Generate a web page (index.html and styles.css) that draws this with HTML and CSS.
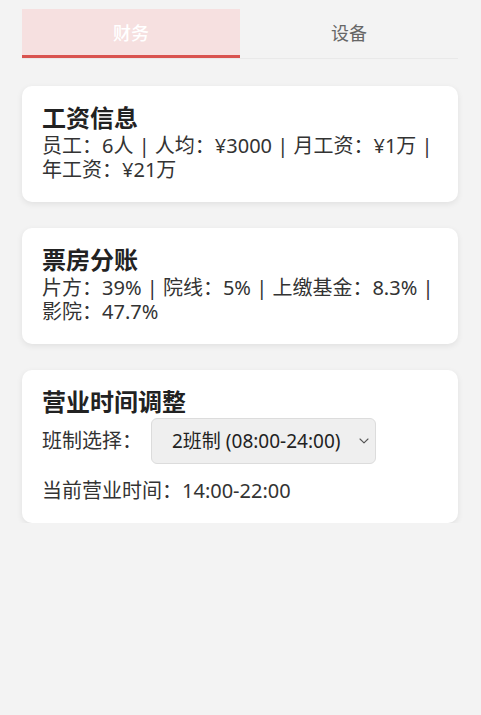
FILE: index.html
```html
<!DOCTYPE html>
<html lang="zh-CN">
<head>
<meta charset="utf-8">
<title>财务</title>
<link rel="stylesheet" href="styles.css">
</head>
<body>
<div class="page">
  <div class="tabs">
    <div class="tab active">财务</div>
    <div class="tab">设备</div>
  </div>

  <div class="card">
    <h2 class="card-title">工资信息</h2>
    <p class="card-text">员工：6人 | 人均：¥3000 | 月工资：¥1万 | 年工资：¥21万</p>
  </div>

  <div class="card">
    <h2 class="card-title">票房分账</h2>
    <p class="card-text">片方：39% | 院线：5% | 上缴基金：8.3% | 影院：47.7%</p>
  </div>

  <div class="card">
    <h2 class="card-title">营业时间调整</h2>
    <div class="shift-row">
      <label class="shift-label" for="shift">班制选择：</label>
      <div class="select-wrap">
        <select id="shift" class="shift-select">
          <option>2班制 (08:00-24:00)</option>
        </select>
        <svg class="chevron" width="12" height="8" viewBox="0 0 12 8"><path d="M2 2 L6 5.8 L10 2" fill="none" stroke="#555" stroke-width="1.1" stroke-linecap="round" stroke-linejoin="round"/></svg>
      </div>
    </div>
    <p class="card-text current">当前营业时间：14:00-22:00</p>
  </div>
</div>
</body>
</html>
```

FILE: styles.css
```css
html, body {
  margin: 0;
  padding: 0;
  background: #f3f3f3;
}

body {
  font-family: "Noto Sans", "Noto Sans CJK SC", sans-serif;
  color: #333;
}

.page {
  width: 436px;
  padding: 9px 0 0 22px;
}

.tabs {
  display: flex;
  border-bottom: 1px solid #e9e9e9;
}

.tab {
  flex: 1;
  height: 46px;
  display: flex;
  align-items: center;
  justify-content: center;
  font-size: 18px;
  color: #666;
  border-bottom: 3px solid transparent;
}

.tab.active {
  background: #f6e0e0;
  color: #fff;
  font-weight: 500;
  border-bottom-color: #d9534f;
}

.card {
  background: #fff;
  border-radius: 10px;
  box-shadow: 0 2px 6px rgba(0, 0, 0, 0.08);
  padding: 18px 20px 20px;
  margin-top: 26px;
}

.tabs + .card {
  margin-top: 27px;
}

.card-title {
  margin: 0 0 2px;
  font-size: 24px;
  line-height: 28px;
  font-weight: 700;
  color: #222;
}

.card-text {
  margin: 0;
  font-size: 20px;
  line-height: 24px;
  color: #333;
  word-break: keep-all;
}

.shift-row {
  display: flex;
  align-items: center;
  margin-top: 1px;
}

.shift-label {
  font-size: 20px;
  line-height: 24px;
  color: #333;
  margin-right: 9px;
}

.select-wrap {
  position: relative;
  width: 225px;
  height: 46px;
}

.shift-select {
  appearance: none;
  -webkit-appearance: none;
  width: 100%;
  height: 100%;
  box-sizing: border-box;
  background: #efefef;
  border: 1px solid #dcdcdc;
  border-radius: 6px;
  padding: 0 30px 0 20px;
  font-family: "Noto Sans", "Noto Sans CJK SC", sans-serif;
  font-size: 19px;
  color: #222;
}

.chevron {
  position: absolute;
  right: 6px;
  top: 19px;
}

.current {
  margin-top: 15px;
}
```
